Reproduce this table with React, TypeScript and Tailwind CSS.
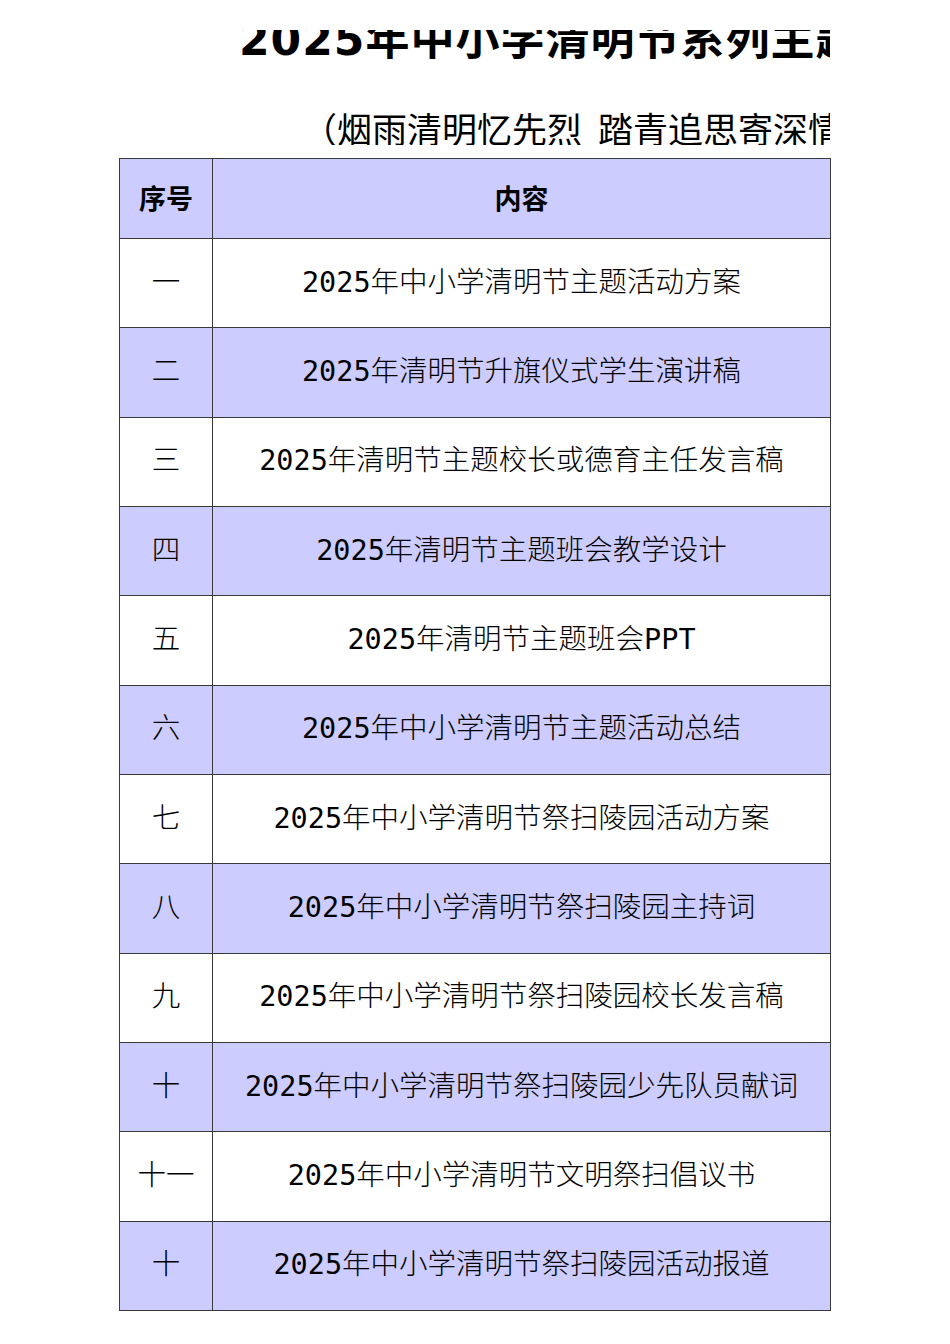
const rows = [
  { no: "一", title: "2025年中小学清明节主题活动方案" },
  { no: "二", title: "2025年清明节升旗仪式学生演讲稿" },
  { no: "三", title: "2025年清明节主题校长或德育主任发言稿" },
  { no: "四", title: "2025年清明节主题班会教学设计" },
  { no: "五", title: "2025年清明节主题班会PPT" },
  { no: "六", title: "2025年中小学清明节主题活动总结" },
  { no: "七", title: "2025年中小学清明节祭扫陵园活动方案" },
  { no: "八", title: "2025年中小学清明节祭扫陵园主持词" },
  { no: "九", title: "2025年中小学清明节祭扫陵园校长发言稿" },
  { no: "十", title: "2025年中小学清明节祭扫陵园少先队员献词" },
  { no: "十一", title: "2025年中小学清明节文明祭扫倡议书" },
  { no: "十", title: "2025年中小学清明节祭扫陵园活动报道" },
];

const cellFont = "font-['DejaVu_Sans_Mono','Noto_Sans_CJK_SC',monospace]";

export default function App() {
  return (
    <div className="w-[950px] h-[1344px] bg-white overflow-hidden text-black">
      <div className="w-[830px]">
        {/* title is cut off at the top and on the right */}
        <div className="mt-[30px] h-[30px] overflow-hidden">
          <div className="-mt-[12px] pl-[239px] whitespace-nowrap text-[44px] leading-[44px] font-bold tracking-[1px] font-['DejaVu_Sans','Noto_Sans_CJK_SC',sans-serif]">
            2025年中小学清明节系列主题活动资料
          </div>
        </div>
        <div className="mt-[50px] h-[35px] overflow-hidden whitespace-nowrap pl-[302px] text-[35px] leading-[35px] font-['Noto_Sans_CJK_SC',sans-serif]">
          （烟雨清明忆先烈
          <span className="ml-[16px]">踏青追思寄深情）</span>
        </div>
      </div>

      <table className="mt-[13px] ml-[119px] w-[712px] border-collapse table-fixed">
        <colgroup>
          <col className="w-[93px]" />
          <col />
        </colgroup>
        <thead>
          <tr className="h-[80px] bg-[#ccccff]">
            <th className="border-[1.5px] border-[#3a3a3a] text-[27px] font-bold font-['Noto_Sans_CJK_SC',sans-serif]">序号</th>
            <th className="border-[1.5px] border-[#3a3a3a] text-[27px] font-bold font-['Noto_Sans_CJK_SC',sans-serif]">内容</th>
          </tr>
        </thead>
        <tbody>
          {rows.map((r, i) => (
            <tr key={i} className={i % 2 === 1 ? "h-[89.33px] bg-[#ccccff]" : "h-[89.33px] bg-white"}>
              <td className={`border-[1.5px] border-[#3a3a3a] text-center text-[28.5px] font-light whitespace-nowrap ${cellFont}`}>
                {r.no}
              </td>
              <td className={`border-[1.5px] border-[#3a3a3a] text-center text-[28.5px] font-light whitespace-nowrap ${cellFont}`}>
                {r.title}
              </td>
            </tr>
          ))}
        </tbody>
      </table>
    </div>
  );
}
